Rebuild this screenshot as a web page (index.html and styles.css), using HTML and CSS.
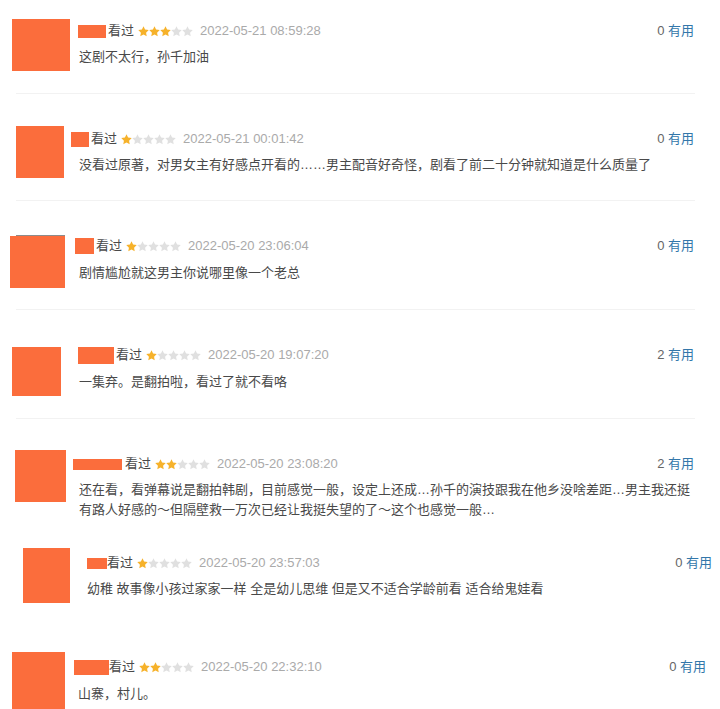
FILE: index.html
```html
<!DOCTYPE html>
<html lang="zh-CN">
<head>
<meta charset="utf-8">
<title>短评</title>
<link rel="stylesheet" href="styles.css">
</head>
<body>
<svg class="defs" aria-hidden="true">
  <symbol id="star" viewBox="0 0 11 11">
    <polygon points="5.5,0.3 7.09,3.62 10.74,4.05 8.07,6.63 8.72,10.3 5.5,8.5 2.28,10.3 2.93,6.63 0.26,4.05 3.91,3.62"/>
  </symbol>
</svg>
<div class="list">

  <div class="item r1">
    <div class="avatar"></div>
    <div class="body">
      <div class="meta">
        <span class="name"></span><span class="seen">看过</span>
        <span class="stars"><svg class="st on"><use href="#star"/></svg><svg class="st on"><use href="#star"/></svg><svg class="st on"><use href="#star"/></svg><svg class="st"><use href="#star"/></svg><svg class="st"><use href="#star"/></svg></span>
        <span class="date">2022-05-21 08:59:28</span>
        <span class="votes"><span class="count">0</span> <span class="useful">有用</span></span>
      </div>
      <p class="text">这剧不太行，孙千加油</p>
    </div>
  </div>
  <div class="sep"></div>

  <div class="item r2">
    <div class="avatar"></div>
    <div class="body">
      <div class="meta">
        <span class="name"></span><span class="seen">看过</span>
        <span class="stars"><svg class="st on"><use href="#star"/></svg><svg class="st"><use href="#star"/></svg><svg class="st"><use href="#star"/></svg><svg class="st"><use href="#star"/></svg><svg class="st"><use href="#star"/></svg></span>
        <span class="date">2022-05-21 00:01:42</span>
        <span class="votes"><span class="count">0</span> <span class="useful">有用</span></span>
      </div>
      <p class="text">没看过原著，对男女主有好感点开看的……男主配音好奇怪，剧看了前二十分钟就知道是什么质量了</p>
    </div>
  </div>
  <div class="sep"></div>

  <div class="item r3">
    <div class="avatar"></div>
    <div class="body">
      <div class="meta">
        <span class="name"></span><span class="seen">看过</span>
        <span class="stars"><svg class="st on"><use href="#star"/></svg><svg class="st"><use href="#star"/></svg><svg class="st"><use href="#star"/></svg><svg class="st"><use href="#star"/></svg><svg class="st"><use href="#star"/></svg></span>
        <span class="date">2022-05-20 23:06:04</span>
        <span class="votes"><span class="count">0</span> <span class="useful">有用</span></span>
      </div>
      <p class="text">剧情尴尬就这男主你说哪里像一个老总</p>
    </div>
  </div>
  <div class="sep"></div>

  <div class="item r4">
    <div class="avatar"></div>
    <div class="body">
      <div class="meta">
        <span class="name"></span><span class="seen">看过</span>
        <span class="stars"><svg class="st on"><use href="#star"/></svg><svg class="st"><use href="#star"/></svg><svg class="st"><use href="#star"/></svg><svg class="st"><use href="#star"/></svg><svg class="st"><use href="#star"/></svg></span>
        <span class="date">2022-05-20 19:07:20</span>
        <span class="votes"><span class="count">2</span> <span class="useful">有用</span></span>
      </div>
      <p class="text">一集弃。是翻拍啦，看过了就不看咯</p>
    </div>
  </div>
  <div class="sep"></div>

  <div class="item r5">
    <div class="avatar"></div>
    <div class="body">
      <div class="meta">
        <span class="name"></span><span class="seen">看过</span>
        <span class="stars"><svg class="st on"><use href="#star"/></svg><svg class="st on"><use href="#star"/></svg><svg class="st"><use href="#star"/></svg><svg class="st"><use href="#star"/></svg><svg class="st"><use href="#star"/></svg></span>
        <span class="date">2022-05-20 23:08:20</span>
        <span class="votes"><span class="count">2</span> <span class="useful">有用</span></span>
      </div>
      <p class="text">还在看，看弹幕说是翻拍韩剧，目前感觉一般，设定上还成…孙千的演技跟我在他乡没啥差距…男主我还挺<br>有路人好感的～但隔壁救一万次已经让我挺失望的了～这个也感觉一般…</p>
    </div>
  </div>

  <div class="item r6">
    <div class="avatar"></div>
    <div class="body">
      <div class="meta">
        <span class="name"></span><span class="seen">看过</span>
        <span class="stars"><svg class="st on"><use href="#star"/></svg><svg class="st"><use href="#star"/></svg><svg class="st"><use href="#star"/></svg><svg class="st"><use href="#star"/></svg><svg class="st"><use href="#star"/></svg></span>
        <span class="date">2022-05-20 23:57:03</span>
        <span class="votes"><span class="count">0</span> <span class="useful">有用</span></span>
      </div>
      <p class="text">幼稚 故事像小孩过家家一样 全是幼儿思维 但是又不适合学龄前看 适合给鬼娃看</p>
    </div>
  </div>

  <div class="item r7">
    <div class="avatar"></div>
    <div class="body">
      <div class="meta">
        <span class="name"></span><span class="seen">看过</span>
        <span class="stars"><svg class="st on"><use href="#star"/></svg><svg class="st on"><use href="#star"/></svg><svg class="st"><use href="#star"/></svg><svg class="st"><use href="#star"/></svg><svg class="st"><use href="#star"/></svg></span>
        <span class="date">2022-05-20 22:32:10</span>
        <span class="votes"><span class="count">0</span> <span class="useful">有用</span></span>
      </div>
      <p class="text">山寨，村儿。</p>
    </div>
  </div>

</div>
</body>
</html>
```

FILE: styles.css
```css
html, body {
  margin: 0;
  padding: 0;
  background: #fff;
}
body {
  font-family: "Liberation Sans", "Noto Sans CJK SC", sans-serif;
  font-size: 13px;
  color: #494949;
  overflow: hidden;
}
.defs {
  display: none;
}
.list {
  width: 720px;
}
.item {
  display: flex;
  align-items: flex-start;
  box-sizing: border-box;
  overflow: hidden;
}
.avatar {
  flex: none;
  background: #fb6d3c;
}
.body {
  flex: 1;
  min-width: 0;
}
.meta {
  display: flex;
  align-items: center;
  height: 20px;
  line-height: 20px;
  white-space: nowrap;
  padding-top: 1px;
}
.name {
  flex: none;
  display: block;
  background: #fb6d3c;
  margin-right: 2px;
}
.seen {
  color: #494949;
  margin-right: 4px;
}
.stars {
  display: flex;
  width: 55px;
  height: 11px;
}
.st {
  width: 11px;
  height: 11px;
  fill: #e0e0e0;
}
.st.on {
  fill: #f6b22b;
}
.date {
  margin-left: 7px;
  color: #aaa;
}
.votes {
  margin-left: auto;
}
.count {
  color: #666;
}
.useful {
  color: #37a;
}
.text {
  margin: 0;
  line-height: 20px;
  white-space: nowrap;
}
.sep {
  height: 1px;
  background: #f2f2f2;
  margin: 0 25px 0 16px;
}

/* row 1 */
.r1 { height: 93px; padding-right: 26px; }
.r1 .avatar { width: 58px; height: 52px; margin: 19px 9px 0 12px; }
.r1 .body { margin-top: 20px; }
.r1 .name { width: 28px; height: 13px; margin-left: -1px; }
.r1 .text { margin-top: 6px; }

/* row 2 */
.r2 { height: 106px; padding-right: 26px; }
.r2 .avatar { width: 48px; height: 52px; margin: 32px 15px 0 16px; }
.r2 .body { margin-top: 34px; }
.r2 .name { width: 18px; height: 15px; margin-left: -8px; }
.r2 .text { margin-top: 6px; }

/* row 3 */
.r3 { height: 108px; padding-right: 26px; }
.r3 .avatar {
  width: 55px;
  height: 53px;
  margin: 34px 14px 0 10px;
  background:
    linear-gradient(90deg, #fff 6px, #8c8c8c 6px) 0 0 / 100% 1px no-repeat,
    linear-gradient(#fb6d3c, #fb6d3c) 0 1px / 100% 52px no-repeat;
}
.r3 .body { margin-top: 34px; }
.r3 .name { width: 19px; height: 16px; margin-left: -4px; }
.r3 .text { margin-top: 7px; }

/* row 4 */
.r4 { height: 108px; padding-right: 26px; }
.r4 .avatar { width: 49px; height: 49px; margin: 37px 18px 0 12px; }
.r4 .body { margin-top: 34px; }
.r4 .name { width: 36px; height: 17px; margin-left: -1px; }
.r4 .text { margin-top: 7px; }

/* row 5 */
.r5 { height: 111px; padding-right: 26px; }
.r5 .avatar { width: 51px; height: 52px; margin: 31px 13px 0 15px; }
.r5 .body { margin-top: 34px; }
.r5 .name { width: 49px; height: 11px; margin-left: -6px; margin-right: 3px; }
.r5 .text { margin-top: 6px; }

/* row 6 */
.r6 { height: 100px; padding-right: 8px; }
.r6 .avatar { width: 47px; height: 55px; margin: 18px 17px 0 23px; }
.r6 .body { margin-top: 22px; }
.r6 .name { width: 20px; height: 11px; margin-right: 0; }
.r6 .text { margin-top: 6px; }

/* row 7 */
.r7 { height: 79px; padding-right: 14px; }
.r7 .avatar { width: 53px; height: 60px; margin: 22px 13px 0 12px; }
.r7 .body { margin-top: 26px; }
.r7 .name { width: 35px; height: 15px; margin-left: -4px; margin-right: 0; }
.r7 .text { margin-top: 7px; }
```
